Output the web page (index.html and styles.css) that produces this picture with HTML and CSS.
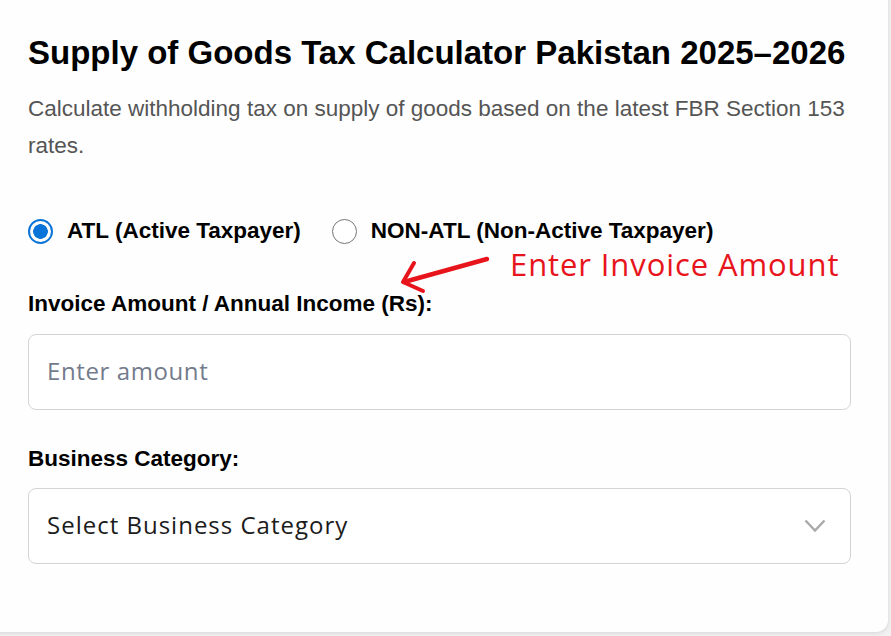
FILE: index.html
```html
<!DOCTYPE html>
<html lang="en">
<head>
<meta charset="utf-8">
<title>Supply of Goods Tax Calculator Pakistan 2025–2026</title>
<link rel="stylesheet" href="styles.css">
</head>
<body>
<div class="card">
  <h1 class="title">Supply of Goods Tax Calculator Pakistan 2025–2026</h1>
  <p class="desc">Calculate withholding tax on supply of goods based on the latest FBR Section 153 rates.</p>

  <div class="radios">
    <label class="radio"><span class="dot checked"></span>ATL (Active Taxpayer)</label>
    <label class="radio"><span class="dot"></span>NON-ATL (Non-Active Taxpayer)</label>
  </div>

  <div class="field">
    <div class="label">Invoice Amount / Annual Income (Rs):</div>
    <div class="box"><span class="placeholder">Enter amount</span></div>
  </div>

  <div class="field">
    <div class="label">Business Category:</div>
    <div class="box select"><span class="value">Select Business Category</span>
      <svg class="chev" width="22" height="14" viewBox="0 0 22 14"><path d="M1.5 1.5 L11 11.5 L20.5 1.5" fill="none" stroke="#a9a9a9" stroke-width="2.4"/></svg>
    </div>
  </div>

  <svg class="arrow" width="100" height="50" viewBox="0 0 100 50"><path d="M87 9 L4 32" fill="none" stroke="#e8141c" stroke-width="4.5" stroke-linecap="round"/><path d="M14 13 L3 32 L23 41" fill="none" stroke="#e8141c" stroke-width="4" stroke-linecap="round" stroke-linejoin="round"/></svg>
  <span class="annot-text">Enter Invoice Amount</span>
</div>
</body>
</html>
```

FILE: styles.css
```css
html, body {
  margin: 0;
  padding: 0;
  background: #f1f1f1;
  height: 100%;
  overflow: hidden;
}
body {
  font-family: "Liberation Sans", Arial, sans-serif;
}
.card {
  position: relative;
  box-sizing: border-box;
  width: 900px;
  height: 652px;
  margin: -20px 0 0 -12px;
  padding: 54px 40px 0 40px;
  background: #fefefe;
  border-radius: 12px;
  box-shadow: 0 1px 4px rgba(0,0,0,0.12);
}
.title {
  margin: 0;
  font-size: 33px;
  line-height: 38px;
  font-weight: bold;
  color: #000;
  white-space: nowrap;
}
.desc {
  margin: 18px 0 0 0;
  font-size: 22.5px;
  line-height: 37px;
  color: #555;
  width: 823px;
}
.radios {
  display: flex;
  gap: 31px;
  margin-top: 54px;
}
.radio {
  display: flex;
  align-items: center;
  gap: 14px;
  font-size: 22.5px;
  font-weight: bold;
  color: #000;
  line-height: 26px;
}
.dot {
  box-sizing: border-box;
  width: 25px;
  height: 25px;
  border-radius: 50%;
  border: 1.5px solid #767676;
  background: #fff;
}
.dot.checked {
  border: 2px solid #0b74d8;
  background: radial-gradient(circle, #0b74d8 0 7px, #fff 7.6px);
}
.field {
  margin-top: 47px;
}
.field + .field {
  margin-top: 36px;
}
.label {
  font-size: 22.5px;
  font-weight: bold;
  color: #000;
  line-height: 26px;
}
.box {
  box-sizing: border-box;
  width: 823px;
  height: 76px;
  margin-top: 17px;
  border: 1px solid #d4d4d4;
  border-radius: 8px;
  background: #fff;
  display: flex;
  align-items: center;
  padding: 0 18px 3px 18px;
  font-family: "Open Sans", "Noto Sans", sans-serif;
  font-size: 24px;
  letter-spacing: 0.6px;
}
.field + .field .box {
  margin-top: 16px;
}
.placeholder {
  color: #737b8c;
}
.select {
  justify-content: space-between;
  padding-right: 24px;
}
.value {
  color: #1b1b1b;
  letter-spacing: 1px;
}
.chev {
  margin-top: 3px;
}
.arrow {
  position: absolute;
  left: 412px;
  top: 270px;
}
.annot-text {
  position: absolute;
  left: 522px;
  top: 264px;
  font-family: "Open Sans", "Noto Sans", sans-serif;
  font-size: 31px;
  line-height: 40px;
  color: #e8141c;
  letter-spacing: 0.9px;
  white-space: nowrap;
}
```
